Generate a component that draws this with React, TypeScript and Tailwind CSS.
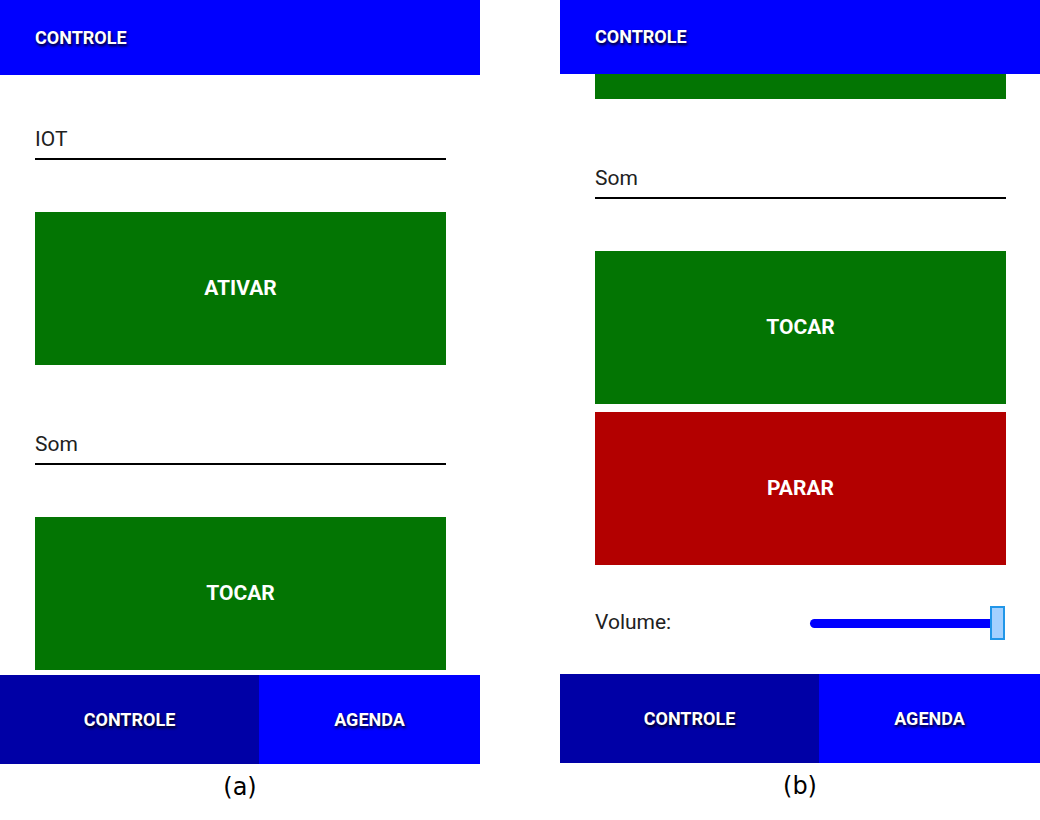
import React from "react";

const roboto = "font-['Roboto','Liberation_Sans',sans-serif]";
const shadow = "[text-shadow:1px_2px_3px_rgba(0,0,0,0.95)]";

function Header({ h }: { h: string }) {
    return (
        <div className={`${h} bg-[#0000ff] flex items-center pl-[35px] pb-[1px] shrink-0`}>
            <span className={`text-white font-bold text-[18px] ${shadow}`}>CONTROLE</span>
        </div>
    );
}

function Label({ text, mt }: { text: string; mt: string }) {
    return (
        <div className={`${mt} border-b-2 border-black h-[34px] pt-[1px]`}>
            <span className="text-[21px] leading-[24px] text-[#212121]">{text}</span>
        </div>
    );
}

function Action({ text, color, mt }: { text: string; color: string; mt: string }) {
    return (
        <div className={`${mt} ${color} h-[153px] shrink-0 flex items-center justify-center`}>
            <span className="text-white font-bold text-[21px]">{text}</span>
        </div>
    );
}

function BottomNav() {
    return (
        <div className="h-[89px] flex shrink-0">
            <div className="w-[259px] bg-[#0000a6] flex items-center justify-center">
                <span className={`text-white font-bold text-[18px] ${shadow}`}>CONTROLE</span>
            </div>
            <div className="flex-1 bg-[#0000ff] flex items-center justify-center">
                <span className={`text-white font-bold text-[18px] ${shadow}`}>AGENDA</span>
            </div>
        </div>
    );
}

function Caption({ text }: { text: string }) {
    return (
        <div className="h-[46px] flex items-center justify-center font-['DejaVu_Sans',sans-serif] text-[24px] text-black">
            {text}
        </div>
    );
}

export default function App() {
    return (
        <div className={`w-[1040px] h-[820px] bg-white flex gap-[80px] ${roboto}`}>
            {/* (a) */}
            <div className="w-[480px] flex flex-col">
                <Header h="h-[75px]" />
                <div className="h-[600px] overflow-hidden flex flex-col pl-[35px] pr-[34px]">
                    <Label text="IOT" mt="mt-[51px]" />
                    <Action text="ATIVAR" color="bg-[#037503]" mt="mt-[52px]" />
                    <Label text="Som" mt="mt-[66px]" />
                    <Action text="TOCAR" color="bg-[#037503]" mt="mt-[52px]" />
                </div>
                <BottomNav />
                <Caption text="(a)" />
            </div>

            {/* (b) */}
            <div className="w-[480px] flex flex-col">
                <Header h="h-[74px]" />
                <div className="h-[600px] overflow-hidden flex flex-col pl-[35px] pr-[34px]">
                    <div className="h-[25px] bg-[#037503] shrink-0" />
                    <Label text="Som" mt="mt-[66px]" />
                    <Action text="TOCAR" color="bg-[#037503]" mt="mt-[52px]" />
                    <Action text="PARAR" color="bg-[#b30000]" mt="mt-[8px]" />
                    <div className="mt-[41px] h-[34px] flex items-center justify-between">
                        <span className="text-[21px] text-[#212121]">Volume:</span>
                        <div className="relative w-[196px] h-[34px] flex items-center">
                            <div className="w-[182px] h-[9px] rounded-l-full bg-[#0000ff]" />
                            <div className="absolute right-[1px] top-0 w-[15px] h-[34px] bg-[#a3d0ff] border-2 border-[#2196e8]" />
                        </div>
                    </div>
                </div>
                <BottomNav />
                <Caption text="(b)" />
            </div>
        </div>
    );
}
